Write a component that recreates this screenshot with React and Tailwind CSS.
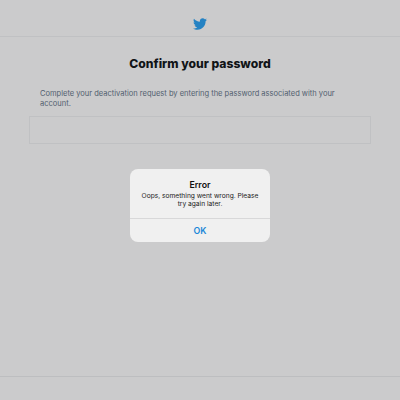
import React from "react";
import { FaTwitter } from "react-icons/fa";

const ErrorDialog = () => (
  <div className="absolute left-[130px] top-[169px] w-[140px] h-[73px] rounded-[8px] bg-[#f0f0f0] text-center overflow-hidden flex flex-col">
    <div className="h-[50px] border-b border-[#d8d8d9] pt-[10px]">
      <h2 className="text-[8.8px] leading-[12px] font-semibold text-[#111]">Error</h2>
      <p className="mt-[1px] text-[6.65px] leading-[8.4px] text-[#222] whitespace-nowrap">
        Oops, something went wrong. Please
        <br />
        try again later.
      </p>
    </div>
    <button className="flex-1 text-[8.8px] font-semibold text-[#2088d8]">OK</button>
  </div>
);

const App = () => {
  return (
    <div className="relative w-[400px] h-[400px] overflow-hidden bg-[#cbcbcc] font-['Inter',sans-serif] flex flex-col">
      <header className="h-[37px] border-b border-[#c0c1c3] flex justify-center pt-[17px]">
        <FaTwitter className="w-[14px] h-[14px] text-[#2482c3]" />
      </header>

      <main className="flex-1 px-[29px]">
        <h1 className="mt-[18px] text-center text-[12.15px] leading-[18px] font-extrabold text-[#111417]">
          Confirm your password
        </h1>
        <p className="mt-[16px] pl-[11px] text-[7.52px] leading-[10px] text-[#52606f] whitespace-nowrap">
          Complete your deactivation request by entering the password associated with your
          <br />
          account.
        </p>
        <div className="mt-[7px] h-[28px] border border-[#c0c1c3]" />
      </main>

      <footer className="h-[24px] border-t border-[#bdbec0]" />
      <ErrorDialog />
    </div>
  );
};

export default App;
